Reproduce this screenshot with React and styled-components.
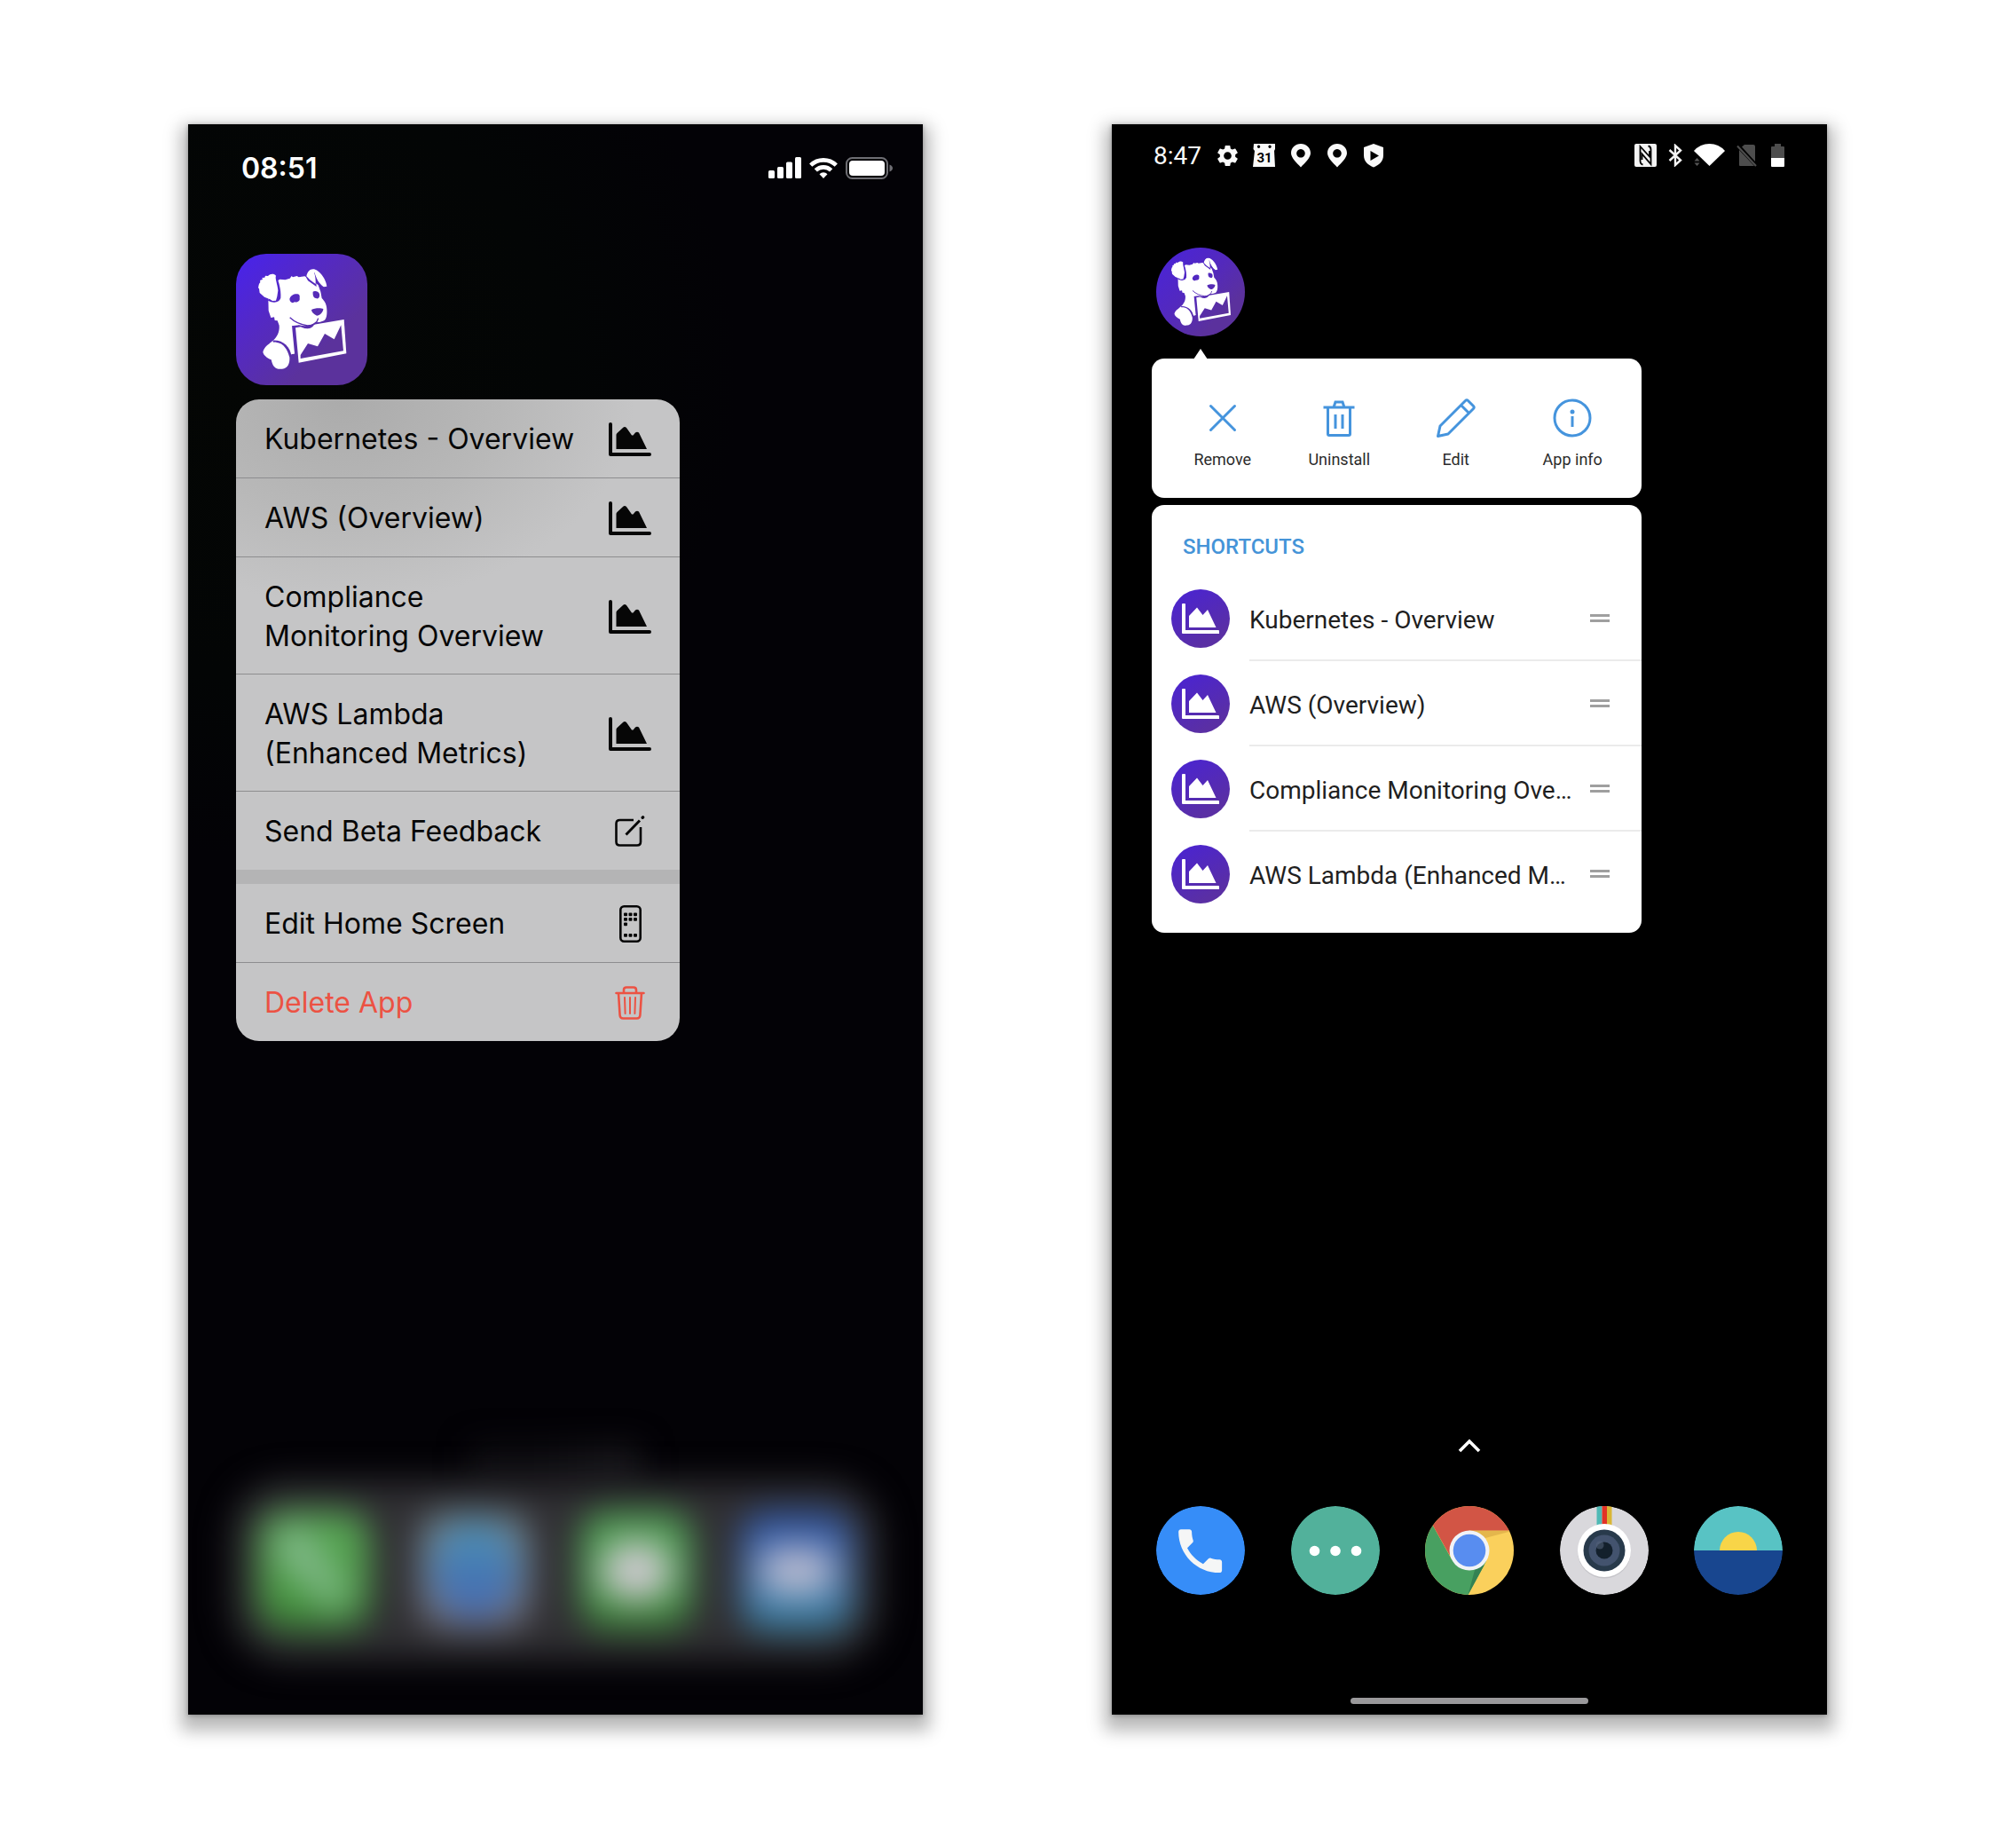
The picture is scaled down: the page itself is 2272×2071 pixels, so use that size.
import React, { useId } from "react";
import styled, { createGlobalStyle, css } from "styled-components";
import { MdSettings } from "react-icons/md";

const GlobalStyle = createGlobalStyle`
  *, *::before, *::after { box-sizing: border-box; }
  body { margin: 0; background: #fff; }
  button { font: inherit; color: inherit; border: 0; padding: 0; margin: 0; background: none; cursor: pointer; }
  svg { display: block; flex: none; }
`;

/* ---------- shared ---------- */

const Page = styled.main`
  display: grid;
  grid-template-columns: 828fr 806fr;
  align-items: start;
  gap: 213px;
  padding: 140px 213px 139px 212px;
`;

const Phone = styled.section`
  display: flex;
  flex-direction: column;
  min-width: 0;
  box-shadow: 0 10px 18px 8px rgba(0, 0, 0, 0.28), 0 1px 5px rgba(0, 0, 0, 0.3);
`;

const Cluster = styled.div`
  display: flex;
  align-items: center;
  gap: ${(p) => p.$gap}px;
`;

const purple = "linear-gradient(135deg, #4a24e4 8%, #5429c4 35%, #5b329c 70%)";

/* ---------- drawings ---------- */

function Dog({ size }) {
  const id = useId();
  return (
    <svg width={size} height={size} viewBox="48 48 444 444" aria-hidden="true">
      <mask id={id} maskUnits="userSpaceOnUse" x="48" y="48" width="444" height="444">
        <path fill="#fff" d="M157 200 158 240 166 264 177 262 179 273 188 274 194 290C196 312 186 330 172 342L160 352 235 388 247 385 262 300 330 280 345 274C355 268 356 250 355 236 355 220 348 208 338 198L334 176 326 154 300 132 280 124 260 127 254 123 240 127 236 123 230 131 214 136 196 134 170 150Z" />
        <path fill="#fff" stroke="#000" strokeWidth="7" d="M308 98C325 98 352 130 356 159L344 163C328 150 318 135 314 112L316 152 294 136 286 122C288 110 296 99 308 98Z" />
        <path fill="#fff" d="M286 124C289 109 297 100 308 100 326 99 352 130 355 158L345 160C330 150 318 132 313 108L311 108C316 122 318 138 317 150L298 136Z" />
        <path fill="#000" d="M178 113C190 128 201 168 199 196 196 212 176 217 156 206Z" />
        <path fill="#fff" d="M138 134 136 129 145 128 147 122 156 123C164 115 176 114 183 122 179 130 188 150 190 172L187 192 183 206 171 207 163 202 144 194 128 180 126 166L123 163C125 156 124 150 130 144L129 138Z" />
        <path fill="#000" d="M229 201C232 188 246 182 256 184 263 185 264 190 263 197 265 208 256 212 246 211 238 217 230 211 229 201Z" />
        <path fill="#000" d="M308 176C314 172 327 174 330 184 332 196 326 202 318 198 309 197 307 186 308 176Z" />
        <path fill="#000" d="M303 237C313 231 334 230 343 234 343 246 331 256 321 257 313 252 304 247 303 237Z" />
        <path fill="#000" d="M235 292 262 289C285 297 305 288 315 280L340 278 420 262 432 392 250 428 247 384 242 384Z" />
        <path fill="#fff" d="M232 292 237 291 246 385 234 388Z" />
        <path fill="#fff" d="M249 298 413 270 421 385 260 416Z" />
        <path fill="#000" d="M258 288 320 277C310 292 304 301 290 301 276 301 266 295 258 288Z" />
        <path fill="#fff" d="M250 284C268 294 302 296 318 277L325 268 300 250Z" />
        <path fill="none" stroke="#000" strokeWidth="4" d="M230 263C248 280 266 287 290 291 311 291 322 282 326 266" />
        <path fill="#000" d="M266 402 266 390 291 351 324 361 348 318 380 337 403 289 411 376Z" />
        <path fill="#000" d="M172 341C205 338 232 362 235 394L226 440 205 430Z" />
        <path fill="#fff" d="M139 380C142 362 166 343 184 347 210 350 222 372 229 398 230 418 224 434 204 437 184 440 172 432 167 406 150 398 141 390 139 380Z" />
      </mask>
      <rect x="48" y="48" width="444" height="444" fill="#fff" mask={`url(#${id})`} />
    </svg>
  );
}

const ChartDark = () => (
  <svg width="48" height="38" viewBox="0 0 48 38" fill="#060606" aria-hidden="true">
    <path d="M2 0a2 2 0 0 1 2 2v32h42a2 2 0 0 1 0 4H2a2 2 0 0 1-2-2V2a2 2 0 0 1 2-2Z" />
    <path d="M8.500 14q0-1 1-2l6.500-6q2-2 4 0l6 8.500h1.500l2.500-3q2-1.500 4 0l9 18.500H8.500Z" />
  </svg>
);

const ChartLight = () => (
  <svg width="42" height="34" viewBox="0 0 42 34" fill="#fff" aria-hidden="true">
    <path d="M0 1q0-1 1-1h2q1 0 1 1v29h37q1 0 1 1v3H1q-1 0-1-1Z" />
    <path d="M8 14l9-9.500 6.500 8.500 5.500-6 9.500 20H8Z" />
  </svg>
);

const Compose = () => (
  <svg width="34" height="36" viewBox="0 0 34 36" fill="none" stroke="#060606" strokeWidth="2.600" aria-hidden="true">
    <path d="M21 5H5.500Q1.500 5 1.500 9v20.500q0 4 4 4H25q4 0 4-4V13" />
    <path d="M12.500 21.500 28 5.500" strokeWidth="3" />
    <path d="M31.200 2.300 31.600 1.900" strokeWidth="3.400" strokeLinecap="round" />
  </svg>
);

const HomeScreen = () => (
  <svg width="25" height="42" viewBox="0 0 25 42" aria-hidden="true">
    <rect x="1.300" y="1.300" width="22.400" height="39.400" rx="4" fill="none" stroke="#060606" strokeWidth="2.600" />
    <g fill="#060606">
      {[[5, 8.5], [10.5, 8.5], [16, 8.5], [5, 14], [10.5, 14], [16, 14], [5, 19.5], [5, 32], [10.5, 32], [16, 32]].map(([x, y]) => (
        <rect key={`${x}-${y}`} x={x} y={y} width="4" height="3.800" rx="1" />
      ))}
    </g>
  </svg>
);

const TrashRed = () => (
  <svg width="34" height="38" viewBox="0 0 34 38" fill="none" stroke="#ec5243" strokeWidth="2.600" strokeLinecap="round" aria-hidden="true">
    <path d="M1.500 8h31M10 8V4.500Q10 1.500 13 1.500h8q3 0 3 3V8M4 8l1.600 25q.3 3.500 3.600 3.500h15.600q3.300 0 3.600-3.500L30 8" />
    <path d="M11 13l.6 18M17 13v18M23 13l-.6 18" strokeWidth="2" />
  </svg>
);

const Signal = () => (
  <svg width="37" height="24" viewBox="0 0 37 24" fill="#fff" aria-hidden="true">
    <rect y="15" width="7" height="9" rx="1.500" />
    <rect x="10" y="11" width="7" height="13" rx="1.500" />
    <rect x="20" y="5.500" width="7" height="18.500" rx="1.500" />
    <rect x="30" width="7" height="24" rx="1.500" />
  </svg>
);

const WifiArcs = () => (
  <svg width="32" height="24" viewBox="0 0 32 24" fill="none" stroke="#fff" strokeWidth="4.600" aria-hidden="true">
    <path d="M1.700 9.200a20.500 20.500 0 0 1 28.600 0" />
    <path d="M7.300 14.900a12.400 12.400 0 0 1 17.400 0" />
    <path d="M16 24l-4.500-4.800a6.300 6.300 0 0 1 9 0Z" fill="#fff" stroke="none" />
  </svg>
);

const BatteryWide = () => (
  <svg width="53" height="25" viewBox="0 0 53 25" aria-hidden="true">
    <rect x="1" y="1" width="46" height="23" rx="6.500" fill="none" stroke="#6e6e73" strokeWidth="2" />
    <rect x="4" y="4" width="40" height="17" rx="4" fill="#fff" />
    <path d="M49.500 8.500q3.500 1.500 3.500 4t-3.500 4Z" fill="#6e6e73" />
  </svg>
);

const Calendar = () => (
  <svg width="28" height="28" viewBox="0 0 28 28" aria-hidden="true">
    <path fill="#fafafa" fillRule="evenodd" d="M2 1h24v6l-1 2 1 18H1L3 9 1.500 7ZM7.500 2.500a1.700 1.700 0 1 0 .1 0ZM20 2.500a1.700 1.700 0 1 0 .1 0Z" />
    <text x="14" y="22" textAnchor="middle" fontFamily="Roboto, sans-serif" fontWeight="700" fontSize="15" fill="#000">31</text>
  </svg>
);

const Pin = () => (
  <svg width="28" height="28" viewBox="0 0 28 28" aria-hidden="true">
    <path fill="#fafafa" fillRule="evenodd" d="M14 1C8 1 3 5.500 3 11.500 3 17 9.500 22.500 14 27.500 18.500 22.500 25 17 25 11.500 25 5.500 20 1 14 1ZM14 7a4.800 4.800 0 1 1-.1 0Z" />
  </svg>
);

const Shield = () => (
  <svg width="28" height="28" viewBox="0 0 28 28" aria-hidden="true">
    <path fill="#fafafa" fillRule="evenodd" d="M14 1 25 5v9c0 7-5 11-11 13.500C8 25 3 21 3 14V5ZM10.500 9v11l9.500-5.500Z" />
  </svg>
);

const Nfc = () => (
  <svg width="25" height="26" viewBox="0 0 25 26" aria-hidden="true">
    <rect width="25" height="26" rx="2" fill="#f4f4f4" />
    <path d="M9.500 23.500Q6.500 23 6.500 19V3L17 14.500V8M15.500 2.500q3 .5 3 4V23L8.500 11.500V18" fill="none" stroke="#000" strokeWidth="1.800" />
  </svg>
);

const Bluetooth = () => (
  <svg width="16" height="26" viewBox="0 0 16 26" fill="none" stroke="#f4f4f4" strokeWidth="2.400" aria-hidden="true">
    <path d="M1.500 7 14 18.500 8 24V2L14 7.500 1.500 19" />
  </svg>
);

const WifiFan = () => (
  <svg width="35" height="26" viewBox="0 0 35 26" aria-hidden="true">
    <path d="M17.500 25 0 8Q7 0 17.500 0T35 8Z" fill="#fff" />
    <path d="M3.500 16 6.500 19.500H.5ZM3.500 25 6.500 21.500H.5Z" fill="#555" />
  </svg>
);

const NoSim = () => (
  <svg width="26" height="26" viewBox="0 0 26 26" aria-hidden="true">
    <path d="M3 7v17q0 1 1 1h16ZM6 3.500 9 1h10q2 0 2 2v17Z" fill="#4d4d4d" />
    <path d="M1 2.500 22 25" stroke="#4d4d4d" strokeWidth="2" />
  </svg>
);

const BatteryTall = () => (
  <svg width="15" height="26" viewBox="0 0 15 26" aria-hidden="true">
    <path d="M4 0h7v3h3q1 0 1 1v12H0V4q0-1 1-1h3Z" fill="#4d4d4d" />
    <path d="M0 16h15v9q0 1-1 1H1q-1 0-1-1Z" fill="#fff" />
  </svg>
);

const blueLine = { fill: "none", stroke: "#4594dd", strokeWidth: 3, width: 44, height: 44, viewBox: "0 0 44 44", "aria-hidden": true };

const Cross = () => (
  <svg {...blueLine}><path d="M8.500 8.500l27 27M35.500 8.500l-27 27" strokeLinecap="round" /></svg>
);
const Bin = () => (
  <svg {...blueLine}>
    <path d="M4.500 10h35M9.500 10v30q0 1.500 1.500 1.500h22q1.500 0 1.500-1.500V10M16 10l2-6h8l2 6M18 18v16M26 18v16" />
  </svg>
);
const Pencil = () => (
  <svg {...blueLine} strokeLinejoin="round">
    <path d="M1.500 42.500 4 31 32.500 2.500q1.500-1.500 3 0l6 6q1.500 1.500 0 3L13 40ZM27.500 7.500l9 9" />
  </svg>
);
const Info = () => (
  <svg {...blueLine}>
    <circle cx="22" cy="22" r="20" />
    <path d="M22 20v12" />
    <circle cx="22" cy="15" r="2.500" fill="#4594dd" stroke="none" />
  </svg>
);

const Handle = () => (
  <svg width="22" height="9" viewBox="0 0 22 9" fill="#9f9f9f" aria-hidden="true">
    <path d="M0 0h22v3H0ZM0 6h22v3H0Z" />
  </svg>
);

const Chevron = () => (
  <svg width="26" height="16" viewBox="0 0 26 16" fill="none" stroke="#fff" strokeWidth="3.600" aria-hidden="true">
    <path d="M2 14 13 3l11 11" />
  </svg>
);

const CallArt = () => (
  <svg width="100" height="100" viewBox="0 0 100 100" aria-hidden="true">
    <circle cx="50" cy="50" r="50" fill="#368df8" />
    <path transform="translate(17 18) scale(2.720)" fill="#f5f6f6" d="M6.620 10.790c1.440 2.830 3.760 5.140 6.590 6.590l2.200-2.200c.27-.27.67-.36 1.020-.24 1.120.37 2.330.57 3.570.57.55 0 1 .45 1 1V20c0 .55-.45 1-1 1-9.390 0-17-7.610-17-17 0-.55.45-1 1-1h3.500c.55 0 1 .45 1 1 0 1.250.2 2.450.57 3.570.11.35.03.74-.25 1.020l-2.200 2.200z" />
  </svg>
);
const ChatArt = () => (
  <svg width="100" height="100" viewBox="0 0 100 100" aria-hidden="true">
    <circle cx="50" cy="50" r="50" fill="#52b19b" />
    <g fill="#fff"><circle cx="26.500" cy="50.500" r="5.800" /><circle cx="50" cy="50.500" r="5.800" /><circle cx="73.500" cy="50.500" r="5.800" /></g>
  </svg>
);
const BrowserArt = () => (
  <svg width="100" height="100" viewBox="0 0 100 100" aria-hidden="true">
    <rect width="100" height="100" fill="#fad05c" />
    <path fill="#e4b64c" d="M50 27.500h50L68 36Z" />
    <path fill="#48a061" d="M0 6 30 60 69 62 48.500 100H0Z" />
    <path fill="#348253" d="M67 66 48.500 100 56 72Z" />
    <path fill="#d25545" d="M0 6V0h100v27.500H50L27.500 55Z" />
    <circle cx="50" cy="50" r="22.500" fill="#f1f3f6" />
    <circle cx="50" cy="50" r="18.300" fill="#588df0" />
  </svg>
);
const CameraArt = () => (
  <svg width="100" height="100" viewBox="0 0 100 100" aria-hidden="true">
    <circle cx="50" cy="50" r="50" fill="#d9d8dc" />
    <path fill="#4fb9b5" d="M41.500 0h6v22h-6Z" /><path fill="#e23327" d="M47.500 0h5.500v22h-5.500Z" /><path fill="#d9b635" d="M53 0h5.500v22H53Z" />
    <circle cx="50" cy="51.500" r="30" fill="#c5c4c9" />
    <circle cx="50" cy="50" r="30" fill="#fff" />
    <circle cx="50" cy="50" r="23.500" fill="#283a4b" />
    <circle cx="50" cy="50" r="17.500" fill="#43536e" />
    <circle cx="50" cy="50" r="9.500" fill="#13202c" />
    <circle cx="45" cy="44" r="4.500" fill="#55657c" opacity=".55" />
  </svg>
);
const SunsetArt = () => (
  <svg width="100" height="100" viewBox="0 0 100 100" aria-hidden="true">
    <path d="M0 50a50 50 0 0 1 100 0Z" fill="#58c3c4" />
    <path d="M0 50a50 50 0 0 0 100 0Z" fill="#18468f" />
    <path d="M29 50a21 21 0 0 1 42 0Z" fill="#f8d548" />
  </svg>
);

/* ---------- left phone ---------- */

const LeftPhone = styled(Phone)`
  aspect-ratio: 828 / 1792;
  padding: 0 50px 62px;
  font-family: Inter, "Liberation Sans", sans-serif;
  background: radial-gradient(circle at 10% 16%, #040604 0, #030505 20%, #030206 32%, #030206 100%);
`;

const LeftStatus = styled.header`
  display: flex;
  align-items: center;
  justify-content: space-between;
  height: 98px;
  margin: 0 -16px 48px 10px;
  color: #fff;
  font-size: 32px;
  font-weight: 600;
`;

const Launch = styled.div`
  display: flex;
  flex-direction: column;
  align-items: flex-start;
  gap: 16px;
  padding-left: 4px;
`;

const RoundedApp = styled.button`
  border-radius: 34px;
  background: ${purple};
`;

const Menu = styled.nav`
  width: 500px;
  max-width: 100%;
  border-radius: 26px;
  overflow: hidden;
  background: radial-gradient(ellipse 330px 230px at 120px 0, #ababab 0, #b8b8b8 55%, #c5c5c6 100%);
`;

const MenuGroup = styled.div`
  & + & { border-top: 16px solid #b4b4b5; }
`;

const MenuItem = styled.button`
  display: flex;
  align-items: center;
  justify-content: space-between;
  width: 100%;
  padding: 23px 32px 21px;
  color: ${(p) => (p.$danger ? "#ec5243" : "#060606")};
  font-size: 32px;
  line-height: 44px;
  text-align: left;
  ${(p) => p.$tall && css`padding-block: 23px 20px;`}
  & + & { border-top: 1px solid #8d8d8f; }
`;

const MenuLabel = styled.span`
  white-space: pre-line;
`;

const IconSlot = styled.span`
  display: flex;
  justify-content: center;
  width: 48px;
`;

const PageGlow = styled.div`
  align-self: center;
  width: 190px;
  height: 40px;
  margin-top: auto;
  background: linear-gradient(90deg, #0f0e12 40%, #19181c 90%);
  filter: blur(18px);
`;

const BlurDock = styled.footer`
  display: flex;
  align-items: center;
  justify-content: space-between;
  height: 200px;
  padding: 0 29px;
  border-radius: 60px;
  background: #302f33;
  filter: blur(19px);
`;

const BlurTile = styled.div`
  display: grid;
  place-items: center;
  width: 126px;
  height: 134px;
  border-radius: 30px;
  background: ${(p) => p.$fill};
`;

const Spot = styled.div`
  width: ${(p) => p.$w}px;
  height: ${(p) => p.$h}px;
  border-radius: ${(p) => p.$r}px;
  background: ${(p) => p.$fill};
  transform: rotate(${(p) => p.$turn || 0}deg);
`;

/* ---------- right phone ---------- */

const RightPhone = styled(Phone)`
  aspect-ratio: 806 / 1792;
  padding: 0 50px 12px;
  font-family: Roboto, "Liberation Sans", sans-serif;
  background: #000;
`;

const RightStatus = styled.header`
  display: flex;
  align-items: center;
  justify-content: space-between;
  height: 70px;
  margin: 0 -2px 69px -3px;
  color: #fafafa;
`;

const Clock = styled.time`
  margin-right: 2px;
  font-size: 28px;
`;

const RoundApp = styled.button`
  align-self: flex-start;
  border-radius: 50%;
  background: linear-gradient(135deg, #4c25d2 15%, #5329bd 45%, #5b319d 75%);
`;

const Popup = styled.div`
  display: flex;
  flex-direction: column;
  gap: 8px;
  width: 552px;
  max-width: 100%;
  margin: 25px 0 0 -5px;
`;

const Card = styled.section`
  position: relative;
  border-radius: 14px;
  background: #fff;
`;

const Pointer = styled.span`
  position: absolute;
  top: -11px;
  left: 47px;
  width: 16px;
  height: 12px;
  background: #fff;
  clip-path: polygon(50% 0, 100% 100%, 0 100%);
`;

const Actions = styled(Card)`
  display: grid;
  grid-template-columns: repeat(4, 1fr);
  padding: 45px 12px 31px 14px;
`;

const Action = styled.button`
  display: flex;
  flex-direction: column;
  align-items: center;
  gap: 13px;
  color: #2b2b2b;
  font-size: 18px;
  line-height: 24px;
`;

const Shortcuts = styled(Card)`
  padding: 33px 0 18px;
`;

const Heading = styled.h2`
  margin: 0 35px 19px;
  color: #4594d8;
  font-size: 24px;
  font-weight: 500;
  line-height: 28px;
`;

const Row = styled.div`
  display: flex;
  align-items: center;
  gap: 22px;
  height: 96px;
  padding-left: 22px;
`;

const Badge = styled.span`
  display: grid;
  place-items: center;
  flex: none;
  width: 66px;
  height: 66px;
  border-radius: 50%;
  background: linear-gradient(150deg, #4c25cc 15%, #5a2fa4 80%);
`;

const RowBody = styled.div`
  display: flex;
  align-items: center;
  gap: 18px;
  flex: 1;
  min-width: 0;
  height: 100%;
  padding-right: 36px;
  border-bottom: 2px solid #ebebeb;
  ${Row}:last-child & { border-bottom-color: transparent; }
`;

const RowLabel = styled.button`
  flex: 1;
  min-width: 0;
  padding-top: 5px;
  color: #1f1f1f;
  font-size: 28px;
  line-height: 36px;
  text-align: left;
  white-space: nowrap;
`;

const Drawer = styled.button`
  align-self: center;
  margin-top: auto;
`;

const RightDock = styled.footer`
  display: flex;
  justify-content: space-between;
  margin: 60px 0 116px;
`;

const DockButton = styled.button`
  border-radius: 50%;
  overflow: hidden;
`;

const HomeBar = styled.div`
  align-self: center;
  width: 268px;
  height: 7px;
  border-radius: 4px;
  background: #9a999b;
`;

const quickItems = [
  { label: "Kubernetes - Overview", Icon: ChartDark },
  { label: "AWS (Overview)", Icon: ChartDark },
  { label: "Compliance\nMonitoring Overview", Icon: ChartDark, tall: true },
  { label: "AWS Lambda\n(Enhanced Metrics)", Icon: ChartDark, tall: true },
  { label: "Send Beta Feedback", Icon: Compose },
];
const systemItems = [
  { label: "Edit Home Screen", Icon: HomeScreen },
  { label: "Delete App", Icon: TrashRed, danger: true },
];
const actions = [["Remove", Cross], ["Uninstall", Bin], ["Edit", Pencil], ["App info", Info]];
const shortcuts = ["Kubernetes - Overview", "AWS (Overview)", "Compliance Monitoring Ove…", "AWS Lambda (Enhanced M…"];
const dockApps = [["Phone", CallArt], ["Messages", ChatArt], ["Browser", BrowserArt], ["Camera", CameraArt], ["Gallery", SunsetArt]];

const renderItem = ({ label, Icon, danger, tall }) => (
  <MenuItem key={label} $danger={danger} $tall={tall}>
    <MenuLabel>{label}</MenuLabel>
    <IconSlot><Icon /></IconSlot>
  </MenuItem>
);

export default function App() {
  return (
    <>
      <GlobalStyle />
      <Page>
        <LeftPhone>
          <LeftStatus>
            <time>08:51</time>
            <Cluster $gap={9}><Signal /><WifiArcs /><BatteryWide /></Cluster>
          </LeftStatus>
          <Launch>
            <RoundedApp aria-label="Datadog"><Dog size={148} /></RoundedApp>
            <Menu>
              <MenuGroup>{quickItems.map(renderItem)}</MenuGroup>
              <MenuGroup>{systemItems.map(renderItem)}</MenuGroup>
            </Menu>
          </Launch>
          <PageGlow />
          <BlurDock>
            <BlurTile $fill="linear-gradient(#57a654, #52a04c 60%, #377f31)">
              <Spot $w={34} $h={110} $r={17} $turn={-38} $fill="linear-gradient(#8fbd9d, #74b478)" />
            </BlurTile>
            <BlurTile $fill="linear-gradient(#66777f, #7d8791 50%, #696670)">
              <Spot $w={96} $h={108} $r={50} $fill="linear-gradient(#4b94b8, #4576b2 55%, #4a6bb4)" />
            </BlurTile>
            <BlurTile $fill="linear-gradient(#4d9c50, #56a35a 60%, #35762f)">
              <Spot $w={76} $h={66} $r={33} $fill="#cbc9cd" />
            </BlurTile>
            <BlurTile $fill="linear-gradient(#2c4f9c, #4670b0 45%, #38809f)">
              <Spot $w={80} $h={54} $r={18} $fill="#b3b8cf" />
            </BlurTile>
          </BlurDock>
        </LeftPhone>

        <RightPhone>
          <RightStatus>
            <Cluster $gap={13}>
              <Clock>8:47</Clock>
              <MdSettings size={29} /><Calendar /><Pin /><Pin /><Shield />
            </Cluster>
            <Cluster $gap={13}>
              <Nfc /><Bluetooth /><WifiFan /><NoSim /><BatteryTall />
            </Cluster>
          </RightStatus>
          <RoundApp aria-label="Datadog"><Dog size={100} /></RoundApp>
          <Popup>
            <Actions>
              <Pointer />
              {actions.map(([label, Icon]) => (
                <Action key={label}><Icon />{label}</Action>
              ))}
            </Actions>
            <Shortcuts>
              <Heading>SHORTCUTS</Heading>
              {shortcuts.map((label) => (
                <Row key={label}>
                  <Badge><ChartLight /></Badge>
                  <RowBody><RowLabel>{label}</RowLabel><Handle /></RowBody>
                </Row>
              ))}
            </Shortcuts>
          </Popup>
          <Drawer aria-label="All apps"><Chevron /></Drawer>
          <RightDock>
            {dockApps.map(([label, Art]) => (
              <DockButton key={label} aria-label={label}><Art /></DockButton>
            ))}
          </RightDock>
          <HomeBar />
        </RightPhone>
      </Page>
    </>
  );
}
